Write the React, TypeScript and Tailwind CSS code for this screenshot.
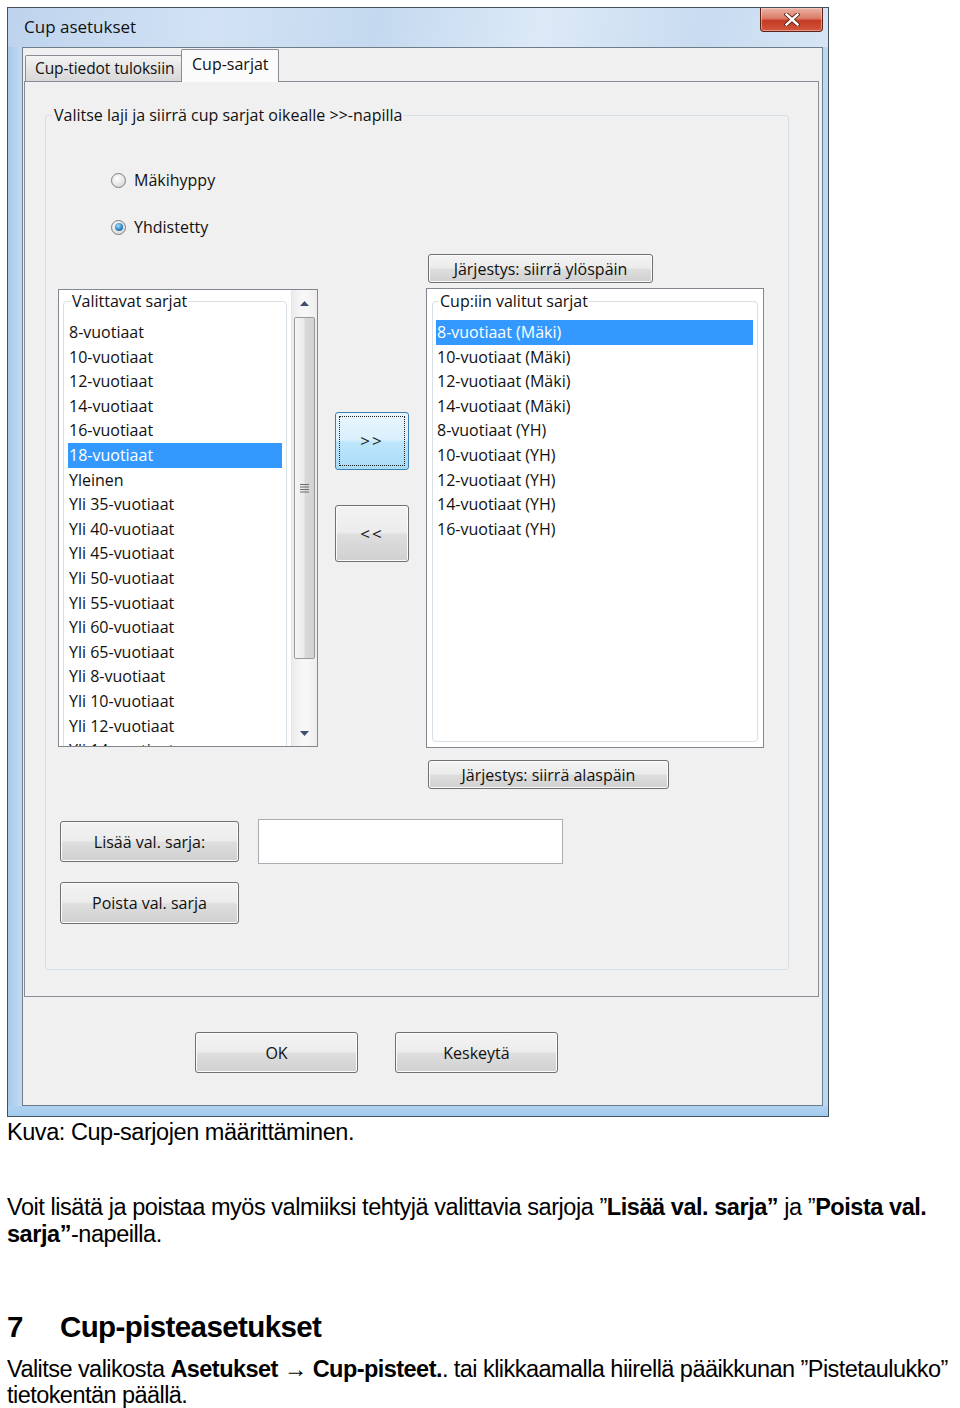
import React from "react";

const leftItems = [
  "8-vuotiaat",
  "10-vuotiaat",
  "12-vuotiaat",
  "14-vuotiaat",
  "16-vuotiaat",
  "18-vuotiaat",
  "Yleinen",
  "Yli 35-vuotiaat",
  "Yli 40-vuotiaat",
  "Yli 45-vuotiaat",
  "Yli 50-vuotiaat",
  "Yli 55-vuotiaat",
  "Yli 60-vuotiaat",
  "Yli 65-vuotiaat",
  "Yli 8-vuotiaat",
  "Yli 10-vuotiaat",
  "Yli 12-vuotiaat",
  "Yli 14-vuotiaat",
];

const rightItems = [
  "8-vuotiaat (Mäki)",
  "10-vuotiaat (Mäki)",
  "12-vuotiaat (Mäki)",
  "14-vuotiaat (Mäki)",
  "8-vuotiaat (YH)",
  "10-vuotiaat (YH)",
  "12-vuotiaat (YH)",
  "14-vuotiaat (YH)",
  "16-vuotiaat (YH)",
];

function Btn({ children, className = "" }: { children: React.ReactNode; className?: string }) {
  return (
    <div
      className={
        "flex shrink-0 items-center justify-center rounded-[3px] border border-[#707070] bg-[linear-gradient(#f3f3f3_0%,#ececec_48%,#dedede_52%,#d0d0d0_100%)] shadow-[inset_0_0_0_1px_#fbfbfb] text-[16px] text-[#111] " +
        className
      }
    >
      {children}
    </div>
  );
}

function Radio({ checked, label }: { checked?: boolean; label: string }) {
  return (
    <div className="flex h-[20px] items-center">
      <div className="flex h-[15px] w-[15px] items-center justify-center rounded-full border border-[#7e7e7e] bg-[radial-gradient(circle_at_40%_35%,#ffffff,#cfcfcf)]">
        {checked && (
          <div className="h-[8px] w-[8px] rounded-full bg-[radial-gradient(circle_at_40%_35%,#9fe0ff,#2a7fc0_60%,#0d4a80)]" />
        )}
      </div>
      <span className="ml-[8px] text-[16px] text-[#111]">{label}</span>
    </div>
  );
}

function Arrow({ up }: { up?: boolean }) {
  return (
    <svg width="9" height="5" viewBox="0 0 9 5">
      {up ? <path d="M0 5 L4.5 0 L9 5 Z" fill="#3d4f6b" /> : <path d="M0 0 L4.5 5 L9 0 Z" fill="#3d4f6b" />}
    </svg>
  );
}

function Scrollbar() {
  return (
    <div className="flex w-[26px] shrink-0 flex-col border-l border-[#e6e6e6] bg-[linear-gradient(90deg,#ececec,#f7f7f7_40%,#f7f7f7_60%,#ececec)]">
      <div className="flex h-[26px] items-center justify-center">
        <Arrow up />
      </div>
      <div className="mx-[2px] mt-[1px] flex h-[342px] items-center justify-center rounded-[2px] border border-[#9a9a9a] bg-[linear-gradient(90deg,#f6f6f6,#ebebeb_45%,#d9d9d9_55%,#d2d2d2)]">
        <svg width="9" height="10" viewBox="0 0 9 10">
          <path d="M0 1.5 H9 M0 4 H9 M0 6.5 H9 M0 9 H9" stroke="#6b6b6b" strokeWidth="1" />
        </svg>
      </div>
      <div className="flex-1" />
      <div className="flex h-[26px] items-center justify-center">
        <Arrow />
      </div>
    </div>
  );
}

function Item({ text, selected }: { text: string; selected?: boolean }) {
  return (
    <div
      className={
        selected
          ? "h-[24.6px] whitespace-nowrap bg-[#3399ff] pl-[1px] text-[16px] leading-[24.6px] text-white"
          : "h-[24.6px] whitespace-nowrap pl-[1px] text-[16px] leading-[24.6px] text-[#111]"
      }
    >
      {text}
    </div>
  );
}

function LeftList() {
  return (
    <div className="mt-[35px] flex h-[458px] w-[260px] shrink-0 overflow-hidden border border-[#828790] bg-white">
      <div className="flex-1 overflow-hidden px-[4px] pt-[11px]">
        <div className="relative h-[600px] rounded-[4px] border border-[#d8dfe5] px-[4px] pt-[18px]">
          <div className="absolute -top-[12px] left-[7px] bg-white px-[1px] text-[16px] leading-[22px] text-[#111]">
            Valittavat sarjat
          </div>
          {leftItems.map((t, i) => (
            <Item key={t} text={t} selected={i === 5} />
          ))}
        </div>
      </div>
      <Scrollbar />
    </div>
  );
}

function RightList() {
  return (
    <div className="mt-[5px] flex h-[460px] w-[338px] flex-col border border-[#828790] bg-white px-[5px] pb-[5px] pt-[12px]">
      <div className="relative flex-1 rounded-[4px] border border-[#d8dfe5] pl-[3px] pr-[4px] pt-[18px]">
        <div className="absolute -top-[12px] left-[6px] bg-white px-[1px] text-[16px] leading-[22px] text-[#111]">
          Cup:iin valitut sarjat
        </div>
        {rightItems.map((t, i) => (
          <Item key={t} text={t} selected={i === 0} />
        ))}
      </div>
    </div>
  );
}

function Window() {
  return (
    <div className="flex h-[1110px] w-[822px] flex-col border border-[#46525e] bg-[#b9d3ee] font-['Open_Sans','Noto_Sans',sans-serif]">
      {/* title bar */}
      <div className="relative flex h-[39px] shrink-0 items-center bg-[linear-gradient(100deg,#bdd3ed_0%,#d2e2f4_25%,#c4d9ef_45%,#dce9f7_65%,#c8dbf0_85%,#d6e5f5_100%)] pb-[2px] pl-[16px]">
        <span className="text-[17px] text-[#111]">Cup asetukset</span>
        <div className="absolute right-[5px] top-0 flex h-[24px] w-[63px] items-center justify-center rounded-b-[4px] border border-t-0 border-[#5e2219] bg-[linear-gradient(#eab3a6_0%,#dc7b66_45%,#c43a25_55%,#d2573c_100%)] shadow-[inset_0_0_0_1px_rgba(255,220,210,0.5)]">
          <svg width="16" height="13" viewBox="0 0 16 13">
            <path d="M2.5 1.5 L13.5 11.5 M13.5 1.5 L2.5 11.5" stroke="#5a1d14" strokeWidth="4.2" strokeLinecap="square" />
            <path d="M2.5 1.5 L13.5 11.5 M13.5 1.5 L2.5 11.5" stroke="#ffffff" strokeWidth="2.4" strokeLinecap="square" />
          </svg>
        </div>
      </div>
      {/* body */}
      <div className="flex h-[1059px] shrink-0">
        <div className="w-[14px] shrink-0 bg-[linear-gradient(90deg,#a9c8ea,#c3dbf3)]" />
        <div className="flex w-[801px] shrink-0 flex-col border border-[#6f7c89] bg-[#f0f0f0]">
          {/* tab strip */}
          <div className="flex h-[33px] shrink-0 items-end pl-[2px]">
            <div className="flex h-[26px] w-[157px] items-start rounded-t-[2px] border border-b-0 border-[#898c95] bg-[linear-gradient(#f4f4f4,#e4e4e4_50%,#d8d8d8)] pl-[9px] pt-[1px] text-[15.5px] leading-[22px] tracking-[-0.1px] text-[#111]">
              Cup-tiedot tuloksiin
            </div>
            <div className="relative z-10 -mb-px -ml-px flex h-[33px] w-[98px] items-start rounded-t-[2px] border border-b-0 border-[#898c95] bg-[#fbfbfb] pl-[10px] pt-[3px] text-[16px] leading-[22px] text-[#111]">
              Cup-sarjat
            </div>
          </div>
          {/* tab page */}
          <div className="ml-px h-[916px] w-[795px] shrink-0 border border-[#898c95] bg-[#f0f0f0] pl-[20px] pt-[33px]">
            <div className="relative h-[855px] w-[744px] rounded-[3px] border border-[#d5dfe5] pl-[12px]">
              <div className="absolute -top-[12px] left-[6px] bg-[#f0f0f0] px-[2px] text-[16px] leading-[22px] text-[#111]">
                Valitse laji ja siirrä cup sarjat oikealle &gt;&gt;-napilla
              </div>
              {/* radios */}
              <div className="ml-[53px] mt-[54px] flex flex-col gap-[27px]">
                <Radio label="Mäkihyppy" />
                <Radio label="Yhdistetty" checked />
              </div>
              {/* lists */}
              <div className="mt-[17px] flex items-start">
                <LeftList />
                <div className="ml-[17px] mt-[158px] flex flex-col">
                  <div className="relative flex h-[58px] w-[74px] items-center justify-center rounded-[3px] border border-[#3c7fb1] bg-[linear-gradient(#eaf6fd_0%,#d9f0fc_48%,#bee6fd_52%,#a9dbf6_100%)] text-[17px] tracking-[2px] text-[#222]">
                    <div className="absolute inset-[3px] border border-dotted border-[#222]" />
                    &gt;&gt;
                  </div>
                  <Btn className="mt-[35px] h-[57px] w-[74px] text-[17px] tracking-[2px]">&lt;&lt;</Btn>
                </div>
                <div className="ml-[17px] flex flex-col">
                  <Btn className="ml-[2px] h-[29px] w-[225px]">Järjestys: siirrä ylöspäin</Btn>
                  <RightList />
                  <Btn className="ml-[2px] mt-[12px] h-[29px] w-[241px]">Järjestys: siirrä alaspäin</Btn>
                </div>
              </div>
              {/* add/remove */}
              <div className="ml-[2px] mt-[30px] flex items-center">
                <Btn className="h-[41px] w-[179px]">Lisää val. sarja:</Btn>
                <div className="ml-[19px] h-[45px] w-[305px] border border-[#abadb3] bg-white" />
              </div>
              <Btn className="ml-[2px] mt-[18px] h-[42px] w-[179px]">Poista val. sarja</Btn>
            </div>
          </div>
          {/* dialog buttons */}
          <div className="ml-[172px] mt-[35px] flex">
            <Btn className="h-[41px] w-[163px]">OK</Btn>
            <Btn className="ml-[37px] h-[41px] w-[163px]">Keskeytä</Btn>
          </div>
        </div>
        <div className="w-[5px] shrink-0 bg-[#bcd7f2]" />
      </div>
      <div className="h-[10px] shrink-0 bg-[linear-gradient(#b0d2f1,#a3cbee)]" />
    </div>
  );
}

export default function App() {
  return (
    <div className="h-[1408px] w-[960px] overflow-hidden bg-white pl-[7px] pt-[7px]">
      <Window />
      <div className="font-['Liberation_Sans',Arial,sans-serif] text-black">
        <div className="mt-[2px] whitespace-nowrap text-[23.5px] leading-[26px] tracking-[-0.45px]">
          Kuva: Cup-sarjojen määrittäminen.
        </div>
        <div className="mt-[49px] whitespace-nowrap text-[23.5px] leading-[27px] tracking-[-0.45px]">
          Voit lisätä ja poistaa myös valmiiksi tehtyjä valittavia sarjoja ”<b>Lisää val. sarja”</b> ja ”<b>Poista val.</b>
          <br />
          <b>sarja”</b>-napeilla.
        </div>
        <div className="mt-[62px] flex whitespace-nowrap text-[29.5px] font-bold leading-[33px] tracking-[-0.6px]">
          <span className="w-[53px]">7</span>
          <span>Cup-pisteasetukset</span>
        </div>
        <div className="mt-[13px] whitespace-nowrap text-[23.5px] leading-[26px] tracking-[-0.55px]">
          Valitse valikosta <b>Asetukset</b> → <b>Cup-pisteet.</b>. tai klikkaamalla hiirellä pääikkunan ”Pistetaulukko”
          <br />
          tietokentän päällä.
        </div>
      </div>
    </div>
  );
}
